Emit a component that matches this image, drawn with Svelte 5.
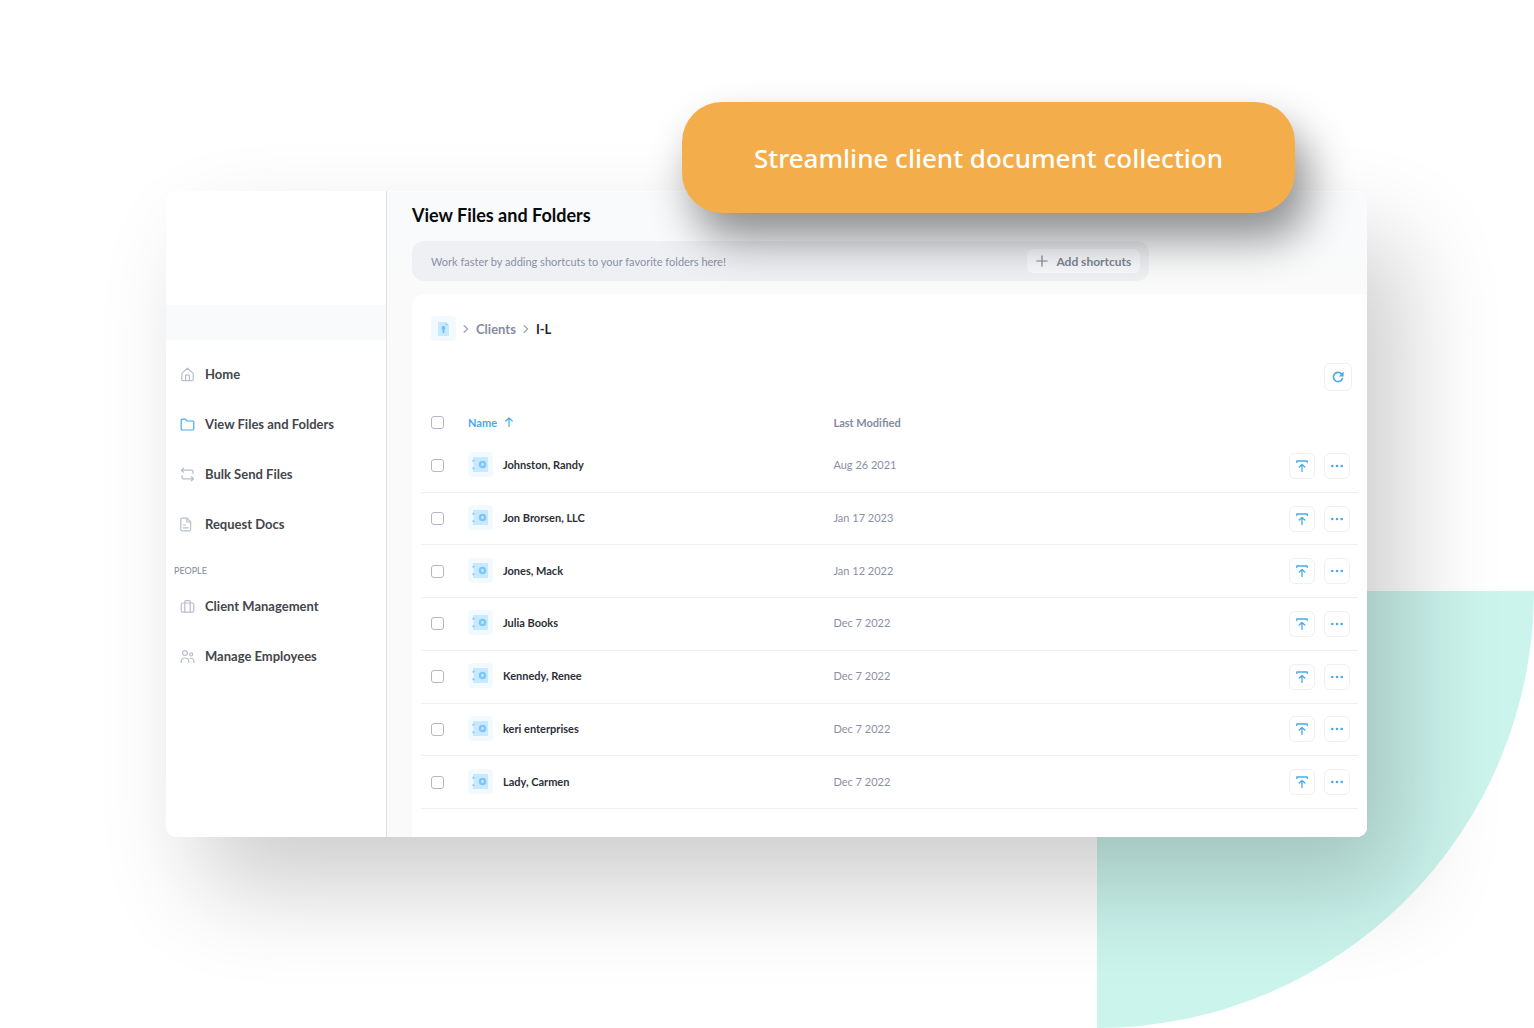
<script lang="ts">
  type Client = { name: string; modified: string; selected: boolean };

  let clients: Client[] = $state([
    { name: 'Johnston, Randy', modified: 'Aug 26 2021', selected: false },
    { name: 'Jon Brorsen, LLC', modified: 'Jan 17 2023', selected: false },
    { name: 'Jones, Mack', modified: 'Jan 12 2022', selected: false },
    { name: 'Julia Books', modified: 'Dec 7 2022', selected: false },
    { name: 'Kennedy, Renee', modified: 'Dec 7 2022', selected: false },
    { name: 'keri enterprises', modified: 'Dec 7 2022', selected: false },
    { name: 'Lady, Carmen', modified: 'Dec 7 2022', selected: false },
  ]);

  const mainNav = [
    { label: 'Home', icon: 'home' },
    { label: 'View Files and Folders', icon: 'folder' },
    { label: 'Bulk Send Files', icon: 'repeat' },
    { label: 'Request Docs', icon: 'doc' },
  ];

  const peopleNav = [
    { label: 'Client Management', icon: 'briefcase' },
    { label: 'Manage Employees', icon: 'users' },
  ];

  let allSelected = $derived(clients.every(c => c.selected));

  function toggleAll() {
    const next = !allSelected;
    clients.forEach(c => (c.selected = next));
  }
</script>

{#snippet navItem(item: { label: string; icon: string })}
  <li>
    <a href="#{item.icon}" class="nav-link" class:active={item.icon === 'folder'}>
      <svg class="nav-icon" viewBox="0 0 15 15" aria-hidden="true">
        {#if item.icon === 'home'}
          <path d="M1.8 6.4 7.5 1.2l5.7 5.2v6.2q0 1-1 1H2.8q-1 0-1-1z" />
          <path d="M5.6 13.6V8.2h3.8v5.4" />
        {:else if item.icon === 'folder'}
          <path d="M1.2 3.2q0-1 1-1h3.2l1.6 1.8h5.8q1 0 1 1v7q0 1-1 1H2.2q-1 0-1-1z" />
        {:else if item.icon === 'repeat'}
          <path d="M3.6 1.2 1.4 3.2l2.2 2M1.6 3.2h10q1.4 0 1.4 1.4v1.8" />
          <path d="M11.4 9.8l2.2 2-2.2 2M13.4 11.8h-10Q2 11.8 2 10.4V8.6" />
        {:else if item.icon === 'doc'}
          <path d="M.8 2.4q0-1.2 1.2-1.2h5l3.6 3.6v7.8q0 1.2-1.2 1.2H2Q.8 13.8.8 12.6z" />
          <path d="M6.8 1.4V5h3.6M3.4 8h1.8M3.4 10.8h4.8" />
        {:else if item.icon === 'briefcase'}
          <rect x="1.2" y="4" width="12.6" height="9.2" rx="1.4" />
          <path d="M4.8 13V2.6q0-1 1-1h3.4q1 0 1 1V13" />
        {:else}
          <circle cx="5" cy="4" r="2.4" />
          <circle cx="11.2" cy="5.4" r="1.5" />
          <path d="M1.2 13.4v-1Q1.4 9 5 9t3.8 3.4v1M10.2 9.4q3.6-.6 3.6 3v1" />
        {/if}
      </svg>
      {item.label}
    </a>
  </li>
{/snippet}

<div class="stage">
  <div class="quarter"></div>

  <div class="window">
    <aside class="sidebar">
      <div class="account"></div>
      <nav>
        <ul>
          {#each mainNav as item}
            {@render navItem(item)}
          {/each}
        </ul>
        <h2 class="group">PEOPLE</h2>
        <ul>
          {#each peopleNav as item}
            {@render navItem(item)}
          {/each}
        </ul>
      </nav>
    </aside>

    <main>
      <h1>View Files and Folders</h1>

      <div class="shortcuts">
        <span>Work faster by adding shortcuts to your favorite folders here!</span>
        <button type="button" class="add">
          <svg viewBox="0 0 12 12" aria-hidden="true"><path d="M6 .8v10.4M.8 6h10.4" /></svg>
          Add shortcuts
        </button>
      </div>

      <section class="panel">
        <div class="crumbs">
          <a href="#root" class="tile" aria-label="All files">
            <svg viewBox="0 0 25 25" aria-hidden="true">
              <path d="M7 6h7.5v3.5H18V20H7z" fill="#c9e9ff" />
              <path d="M14.5 6 18 9.5h-3.5z" fill="#8fd0fb" />
              <circle cx="12.5" cy="12" r="1.9" fill="#6cc0f8" />
              <path d="M11.6 12.5h1.8V17h-1.8z" fill="#6cc0f8" />
            </svg>
          </a>
          <svg class="chevron" viewBox="0 0 6 8" aria-hidden="true"><path d="m1.2.8 3.4 3.2-3.4 3.2" /></svg>
          <a href="#clients">Clients</a>
          <svg class="chevron" viewBox="0 0 6 8" aria-hidden="true"><path d="m1.2.8 3.4 3.2-3.4 3.2" /></svg>
          <span class="current">I-L</span>
        </div>

        <div class="toolbar">
          <button type="button" class="square refresh" aria-label="Refresh">
            <svg viewBox="0 0 12 12" aria-hidden="true">
              <path d="M10.4 7.4A4.6 4.6 0 1 1 9.4 2.9" />
              <path d="M11.6.6v4.8H6.8z" class="solid" />
            </svg>
          </button>
        </div>

        <table>
          <thead>
            <tr>
              <th class="check">
                <input type="checkbox" aria-label="Select all" checked={allSelected} onchange={toggleAll} />
              </th>
              <th class="name">
                <button type="button" class="sort">
                  Name
                  <svg viewBox="0 0 8 10" aria-hidden="true"><path d="M4 9.5V1M.8 4 4 .8 7.2 4" /></svg>
                </button>
              </th>
              <th>Last Modified</th>
              <th class="actions"></th>
            </tr>
          </thead>
          <tbody>
            {#each clients as client}
              <tr>
                <td class="check">
                  <input type="checkbox" aria-label="Select {client.name}" bind:checked={client.selected} />
                </td>
                <td class="name">
                  <div class="file">
                    <span class="tile">
                      <svg viewBox="0 0 25 25" aria-hidden="true">
                        <path d="M5 5h15v15H5z" fill="#c9e9ff" />
                        <circle cx="14.5" cy="12.5" r="2.6" fill="none" stroke="#7cc7f9" stroke-width="2.4" />
                        <path d="M4.6 10V7.4l2.6 1.3zM4.6 17.6V15l2.6 1.3z" fill="#7cc7f9" />
                        <path d="M4.6 10.5h1v4h-1z" fill="#f3faff" />
                      </svg>
                    </span>
                    {client.name}
                  </div>
                </td>
                <td class="date">{client.modified}</td>
                <td class="actions">
                  <div class="buttons">
                    <button type="button" class="square" aria-label="Upload to {client.name}">
                      <svg viewBox="0 0 12 12" aria-hidden="true">
                        <path d="M.8 2.6V1h10.4v1.6M6 11.6V5M3.2 7 6 4.4 8.8 7" />
                      </svg>
                    </button>
                    <button type="button" class="square" aria-label="More for {client.name}">
                      <svg viewBox="0 0 12 12" aria-hidden="true">
                        <circle cx="1.3" cy="6" r="1.3" class="solid" />
                        <circle cx="6" cy="6" r="1.3" class="solid" />
                        <circle cx="10.7" cy="6" r="1.3" class="solid" />
                      </svg>
                    </button>
                  </div>
                </td>
              </tr>
            {/each}
          </tbody>
        </table>
      </section>
    </main>
  </div>

  <div class="banner">Streamline client document collection</div>
</div>

<style>
  .stage {
    position: relative;
    box-sizing: border-box;
    min-height: 100vh;
    padding: 191px 167px 191px 166px;
    overflow: hidden;
    background: #fff;
    font-family: Lato, 'Liberation Sans', sans-serif;
    color: #2d3038;
  }

  .quarter {
    position: absolute;
    right: 0;
    bottom: 0;
    width: 437px;
    height: 437px;
    border-bottom-right-radius: 100%;
    background: #cbf4ed;
  }

  .window {
    position: relative;
    display: flex;
    border-radius: 10px;
    background: #fff;
    box-shadow: 35px 50px 100px rgba(0, 0, 0, 0.2);
  }

  .sidebar {
    flex: none;
    box-sizing: border-box;
    width: 221px;
    padding-top: 114px;
    border-right: 1px solid #dfe1e4;
  }

  .account {
    height: 35px;
    margin-bottom: 9px;
    background: #f8fafc;
  }

  ul {
    list-style: none;
    margin: 0;
    padding: 0;
  }

  .nav-link {
    display: flex;
    align-items: center;
    gap: 10px;
    height: 50px;
    padding-left: 14px;
    color: #44464b;
    font-size: 13px;
    font-weight: 700;
    text-decoration: none;
  }

  svg {
    fill: none;
    stroke-linecap: round;
    stroke-linejoin: round;
  }

  .nav-icon {
    width: 15px;
    height: 15px;
    stroke: #b9bfca;
    stroke-width: 1.2;
  }

  .active .nav-icon {
    stroke: #45aaeb;
  }

  .group {
    margin: 15px 0 3px;
    padding-left: 8px;
    color: #8289a0;
    font-size: 9px;
    line-height: 14px;
    font-weight: 400;
  }

  main {
    flex: 1;
    min-width: 0;
    display: flex;
    flex-direction: column;
    padding: 11px 0 0 25px;
    border-top: 1px solid #fdfdfe;
    border-radius: 0 10px 10px 0;
    background: linear-gradient(#f8fafc, #fafafa 100px);
  }

  h1 {
    margin: 0 0 14px;
    color: #08090b;
    font-size: 18px;
    line-height: 24px;
    font-weight: 700;
  }

  .shortcuts {
    display: flex;
    align-items: center;
    justify-content: space-between;
    box-sizing: border-box;
    width: 77.2%;
    height: 40px;
    padding: 0 9px 0 19px;
    border-radius: 12px;
    background: #eff0f4;
    color: #8a90a5;
    font-size: 11px;
  }

  button {
    margin: 0;
    font-family: inherit;
    cursor: pointer;
  }

  .add {
    display: flex;
    align-items: center;
    gap: 8px;
    height: 24px;
    padding: 0 9px;
    border: 0;
    border-radius: 6px;
    background: #f8f9fb;
    color: #7d8598;
    font-size: 12px;
    font-weight: 700;
  }

  .add svg {
    width: 12px;
    height: 12px;
    stroke: #7d8598;
    stroke-width: 1.2;
  }

  .panel {
    flex: 1;
    margin-top: 13px;
    padding: 22px 9px 28px;
    border-radius: 12px 0 10px 0;
    background: #fff;
  }

  .crumbs {
    display: flex;
    align-items: center;
    gap: 7px;
    padding-left: 10px;
    font-size: 13px;
    font-weight: 700;
  }

  .crumbs a {
    color: #858ca0;
    text-decoration: none;
  }

  .crumbs .current {
    color: #22252c;
  }

  .chevron {
    width: 6px;
    height: 8px;
    stroke: #a2a8b6;
    stroke-width: 1.4;
  }

  .tile {
    flex: none;
    width: 25px;
    height: 25px;
    border-radius: 4px;
    background: #f3faff;
  }

  .tile svg {
    display: block;
  }

  .toolbar {
    display: flex;
    justify-content: flex-end;
    padding: 22px 6px 13px 0;
  }

  .square {
    display: grid;
    place-items: center;
    box-sizing: border-box;
    width: 26px;
    height: 26px;
    padding: 0;
    border: 1px solid #eef0f2;
    border-radius: 6px;
    background: #fff;
  }

  .square svg {
    width: 12px;
    height: 12px;
    stroke: #4aa9e6;
    stroke-width: 1.3;
  }

  .square .solid {
    fill: #4aa9e6;
    stroke: none;
  }

  .refresh {
    width: 28px;
    height: 28px;
  }

  .refresh svg {
    stroke-width: 1.6;
  }

  table {
    width: 100%;
    height: 405px;
    border-collapse: separate;
    border-spacing: 0;
    table-layout: fixed;
    font-size: 11px;
  }

  th,
  td {
    padding: 0;
    text-align: left;
  }

  th {
    height: 36px;
    color: #858ca0;
    font-weight: 700;
  }

  td {
    height: 51px;
    border-bottom: 1px solid #eeeff0;
  }

  td.name,
  td.date {
    height: 49px;
    padding-bottom: 2px;
  }

  .check {
    width: 47px;
  }

  .name {
    width: 39%;
  }

  .actions {
    width: 78px;
  }

  input {
    display: block;
    appearance: none;
    box-sizing: border-box;
    width: 13px;
    height: 13px;
    margin: 0 0 0 10px;
    border: 1px solid #b4b8c4;
    border-radius: 3px;
    background: #fff;
  }

  input:checked {
    border-color: #45aaeb;
    background: #45aaeb;
  }

  .sort {
    display: flex;
    align-items: center;
    gap: 8px;
    padding: 0;
    border: 0;
    background: none;
    color: #45aaeb;
    font-size: 11px;
    font-weight: 700;
  }

  .sort svg {
    width: 8px;
    height: 10px;
    stroke: #45aaeb;
    stroke-width: 1.2;
  }

  .file {
    display: flex;
    align-items: center;
    gap: 10px;
    color: #2d3038;
    font-weight: 700;
  }

  .date {
    color: #8a90a5;
  }

  .buttons {
    display: flex;
    justify-content: flex-end;
    gap: 9px;
    padding-right: 8px;
  }

  .banner {
    position: absolute;
    top: 102px;
    right: 239px;
    display: grid;
    place-items: center;
    width: 613px;
    height: 111px;
    border-radius: 40px;
    background: #f3ad4b;
    box-shadow: 12px 26px 44px rgba(0, 0, 0, 0.43);
    color: #fff;
    font-family: 'Noto Sans', 'Open Sans', sans-serif;
    font-size: 26px;
    font-weight: 500;
  }
</style>
